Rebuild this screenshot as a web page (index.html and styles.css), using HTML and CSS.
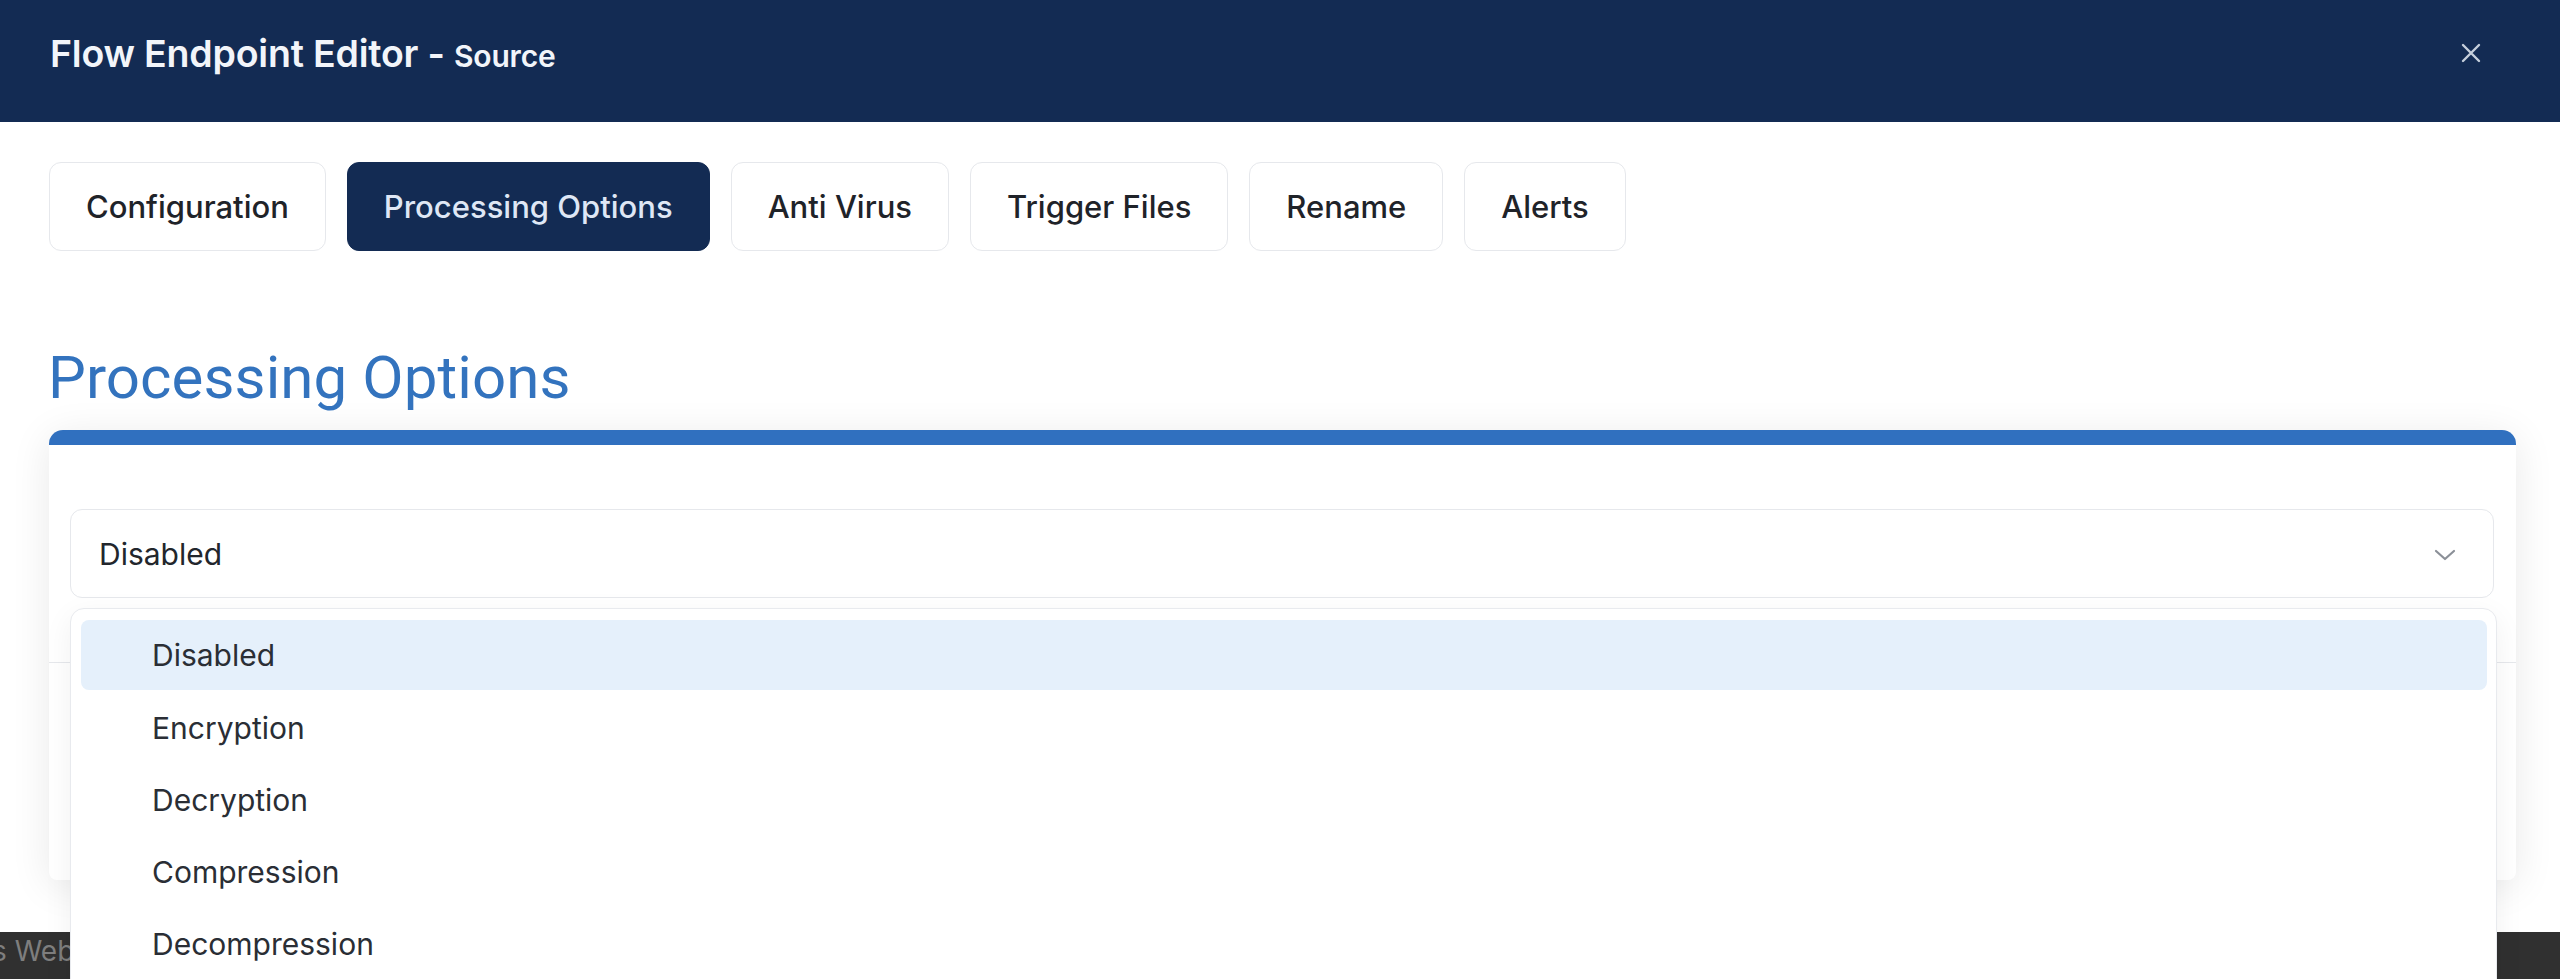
FILE: index.html
```html
<!DOCTYPE html>
<html lang="en">
<head>
    <meta charset="UTF-8">
    <meta name="viewport" content="width=device-width, initial-scale=1.0">
    <title>Flow Endpoint Editor - Source</title>
    <link rel="stylesheet" href="styles.css">
</head>
<body>
    <div class="page">
        <div class="modal">
            <div class="modal-header">
                <h1>Flow Endpoint Editor - <span class="subtitle">Source</span></h1>
                <button class="close-btn" aria-label="Close">
                    <svg width="22" height="22" viewBox="0 0 22 22">
                        <path d="M3 3 L19 19 M19 3 L3 19" stroke="#c6cfdc" stroke-width="2.4" stroke-linecap="round" fill="none"/>
                    </svg>
                </button>
            </div>

            <div class="modal-body">
                <div class="tabs">
                    <button class="tab">Configuration</button>
                    <button class="tab active">Processing Options</button>
                    <button class="tab">Anti Virus</button>
                    <button class="tab">Trigger Files</button>
                    <button class="tab">Rename</button>
                    <button class="tab">Alerts</button>
                </div>

                <h2 class="section-title">Processing Options</h2>

                <div class="card">
                    <div class="select-wrap">
                        <div class="select">
                            <span>Disabled</span>
                            <svg class="chevron" width="22" height="12" viewBox="0 0 22 12">
                                <path d="M2 2 L11 10 L20 2" stroke="#8b9098" stroke-width="2.2" stroke-linecap="round" stroke-linejoin="round" fill="none"/>
                            </svg>
                        </div>
                        <ul class="dropdown">
                            <li class="option selected">Disabled</li>
                            <li class="option">Encryption</li>
                            <li class="option">Decryption</li>
                            <li class="option">Compression</li>
                            <li class="option">Decompression</li>
                        </ul>
                    </div>
                    <div class="card-row"></div>
                </div>
            </div>
        </div>

        <div class="footer-bar">
            <span class="footer-text">s Web</span>
        </div>
    </div>
</body>
</html>
```

FILE: styles.css
```css
* {
    margin: 0;
    padding: 0;
    box-sizing: border-box;
}

html, body {
    height: 100%;
    overflow: hidden;
}

body {
    font-family: 'Inter', 'Noto Sans', sans-serif;
    background: #ffffff;
    color: #1f2329;
}

.page {
    height: 100vh;
    overflow: hidden;
    display: flex;
    flex-direction: column;
}

.modal {
    background: white;
    height: 932px;
    flex-shrink: 0;
}

.modal-header {
    height: 122px;
    background: #132b53;
    display: flex;
    align-items: center;
    justify-content: space-between;
    padding: 0 78px 16px 50px;
}

.modal-header h1 {
    color: #f2f5fa;
    font-size: 37.5px;
    font-weight: 600;
    letter-spacing: -0.2px;
}

.subtitle {
    font-size: 30px;
    font-weight: 600;
}

.close-btn {
    background: none;
    border: none;
    cursor: pointer;
    display: flex;
}

.modal-body {
    padding: 40px 44px 0 49px;
}

.tabs {
    display: flex;
    gap: 21px;
}

.tab {
    height: 89px;
    padding: 0 36px;
    background: white;
    border: 1.5px solid #e6e8ec;
    border-radius: 12px;
    font-family: 'Inter', sans-serif;
    font-size: 31px;
    font-weight: 500;
    color: #1f2329;
    cursor: pointer;
}

.tab.active {
    background: #132b53;
    border-color: #132b53;
    color: #dfe7f5;
}

.section-title {
    font-family: 'Roboto', 'Liberation Sans', sans-serif;
    font-size: 60px;
    font-weight: 400;
    color: #3373be;
    line-height: 70px;
    margin: 92px 0 0 -1px;
    height: 87px;
    letter-spacing: 0.1px;
}

.card {
    background: white;
    border-top: 15px solid #3070bf;
    border-radius: 14px 14px 8px 8px;
    box-shadow: 0 6px 40px rgba(0, 0, 0, 0.09);
    height: 450px;
    padding: 64px 22px 0 21px;
}

.select-wrap {
    position: relative;
}

.select {
    height: 89px;
    border: 1.5px solid #e6e8ec;
    border-radius: 12px;
    display: flex;
    align-items: center;
    justify-content: space-between;
    padding: 0 37px 0 28px;
    font-size: 30px;
    color: #22262c;
}

.chevron {
    margin-top: 2px;
}

.card-row {
    margin: 64px -22px 0 -21px;
    border-top: 1.5px solid #e6e8ec;
}

/* open option list, laid over the card and the footer */
.dropdown {
    position: absolute;
    top: calc(100% + 10px);
    left: 0;
    right: -3px;
    z-index: 10;
    list-style: none;
    background: white;
    border: 1.5px solid #e8eaee;
    border-radius: 14px;
    box-shadow: 0 8px 30px rgba(0, 0, 0, 0.06);
    padding: 11px 9px 40px 10px;
}

.option {
    height: 72px;
    display: flex;
    align-items: center;
    padding-left: 71px;
    border-radius: 8px;
    font-size: 30px;
    color: #2a2e35;
}

.option.selected {
    background: #e5f0fb;
    height: 70px;
    margin-bottom: 2px;
}

.footer-bar {
    flex: 1;
    background: #303030;
    overflow: hidden;
    white-space: nowrap;
}

.footer-text {
    display: block;
    margin-left: -8px;
    padding-top: 2px;
    font-size: 28px;
    color: #7e7e7e;
}
```
